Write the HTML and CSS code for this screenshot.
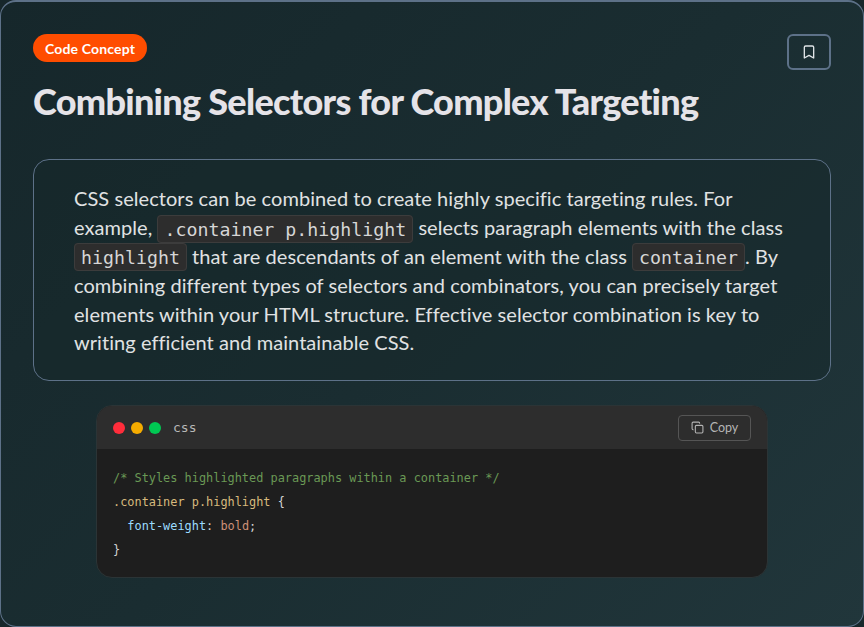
FILE: index.html
```html
<!DOCTYPE html>
<html lang="en">
<head>
<meta charset="utf-8">
<title>Combining Selectors</title>
<link rel="stylesheet" href="styles.css">
</head>
<body>
<main class="card">
  <div class="top">
    <div class="heading">
      <span class="badge">Code Concept</span>
      <h1 class="title">Combining Selectors for Complex Targeting</h1>
    </div>
    <button class="bookmark" aria-label="Bookmark">
      <svg class="bookmark-icon" viewBox="0 0 24 24" fill="none" stroke="currentColor" stroke-width="2" stroke-linecap="round" stroke-linejoin="round"><path d="M19 21l-7-4-7 4V5a2 2 0 0 1 2-2h10a2 2 0 0 1 2 2z"/></svg>
    </button>
  </div>
  <section class="explain">
    <p class="explain-text">CSS selectors can be combined to create highly specific targeting rules. For example, <code class="inline">.container p.highlight</code> selects paragraph elements with the class <code class="inline">highlight</code> that are descendants of an element with the class <code class="inline">container</code>. By combining different types of selectors and combinators, you can precisely target elements within your HTML structure. Effective selector combination is key to writing efficient and maintainable CSS.</p>
  </section>
  <section class="code-panel">
    <header class="code-head">
      <div class="code-label">
        <span class="dot dot-red"></span>
        <span class="dot dot-yellow"></span>
        <span class="dot dot-green"></span>
        <span class="lang">css</span>
      </div>
      <button class="copy">
        <svg class="copy-icon" viewBox="0 0 24 24" fill="none" stroke="currentColor" stroke-width="2" stroke-linecap="round" stroke-linejoin="round"><rect x="8" y="8" width="14" height="14" rx="2"/><path d="M4 16c-1.1 0-2-.9-2-2V4c0-1.100.9-2 2-2h10c1.100 0 2 .9 2 2"/></svg>
        <span>Copy</span>
      </button>
    </header>
<pre class="code"><span class="c-comment">/* Styles highlighted paragraphs within a container */</span>
<span class="c-sel">.container p.highlight</span> <span class="c-punc">{</span>
  <span class="c-prop">font-weight</span><span class="c-punc">:</span> <span class="c-val">bold</span><span class="c-punc">;</span>
<span class="c-punc">}</span></pre>
  </section>
</main>
</body>
</html>
```
FILE: styles.css
```css
* { box-sizing: border-box; }
html, body { margin: 0; padding: 0; height: 100%; }
body { background: #17272b; font-family: "Lato", "Open Sans", sans-serif; }

.card {
  height: 627px;
  padding: 34px 32px 0 32px;
  border: 1px solid #5d7188;
  border-top-width: 2px;
  border-radius: 16px;
  background: linear-gradient(135deg, #16272b 0%, #1a2d31 50%, #21363b 100%);
  display: flex;
  flex-direction: column;
  color: #e5e3e8;
}

.top { display: flex; justify-content: space-between; align-items: flex-start; }
.heading { display: flex; flex-direction: column; align-items: flex-start; }
.badge {
  height: 28px;
  width: 114px;
  margin-top: -2px;
  border-radius: 14px;
  background: #ff4d00;
  color: #fff;
  font-size: 14px;
  font-weight: 700;
  letter-spacing: 0.15px;
  display: flex;
  align-items: center;
  justify-content: center;
}
.title {
  margin: 15px 0 0;
  font-size: 36px;
  line-height: 48px;
  font-weight: 900;
  letter-spacing: -0.7px;
  color: #e5e3e8;
}
.bookmark {
  width: 44px;
  height: 36px;
  margin-top: -2px;
  padding: 0;
  background: transparent;
  border: 2px solid #5d7188;
  border-radius: 6px;
  color: #dfe3e6;
  display: flex;
  align-items: center;
  justify-content: center;
}
.bookmark-icon { width: 16px; height: 16px; }

.explain {
  margin-top: 34px;
  height: 222px;
  padding: 24.4px 40px 0;
  border: 1px solid #5d7188;
  border-radius: 16px;
  background: rgba(23, 39, 43, 0.45);
}
.explain-text {
  margin: 0;
  font-size: 20px;
  line-height: 28.8px;
  letter-spacing: 0.06px;
  color: #e0e2e3;
}
.inline {
  font-family: "DejaVu Sans Mono", monospace;
  font-size: 18.25px;
  letter-spacing: 0;
  line-height: 1;
  padding: 2.5px 6px;
  background: #2d2d2d;
  border: 1px solid #3c3c3c;
  border-radius: 4px;
  color: #d6d6d6;
}

.code-panel {
  width: 672px;
  height: 173px;
  margin: 24px auto 0;
  border: 1px solid #2b3436;
  border-radius: 16px;
  background: #1e1e1e;
  overflow: hidden;
}
.code-head {
  height: 43px;
  padding: 0 16px;
  background: #2d2d2d;
  display: flex;
  align-items: center;
  justify-content: space-between;
}
.code-label { display: flex; align-items: center; gap: 6px; }
.dot { width: 12px; height: 12px; border-radius: 50%; }
.dot-red { background: #ff2d3b; }
.dot-yellow { background: #f5ac00; }
.dot-green { background: #00c853; }
.lang {
  margin-left: 6px;
  padding-bottom: 1px;
  font-family: "DejaVu Sans Mono", monospace;
  font-size: 13px;
  color: #b8b8b8;
}
.copy {
  width: 73px;
  height: 26px;
  padding: 0;
  background: transparent;
  border: 1px solid #555;
  border-radius: 4px;
  color: #b4b4b4;
  font-family: "Lato", sans-serif;
  font-size: 12.5px;
  display: flex;
  align-items: center;
  justify-content: center;
  gap: 6px;
}
.copy-icon { width: 13px; height: 13px; }

.code {
  margin: 0;
  padding: 17px 16px;
  font-family: "DejaVu Sans Mono", monospace;
  font-size: 11.9px;
  line-height: 24px;
  color: #d4d4d4;
}
.c-comment { color: #6a9955; }
.c-sel { color: #d7ba7d; }
.c-prop { color: #9cdcfe; }
.c-val { color: #ce9178; }
.c-punc { color: #d4d4d4; }
```
